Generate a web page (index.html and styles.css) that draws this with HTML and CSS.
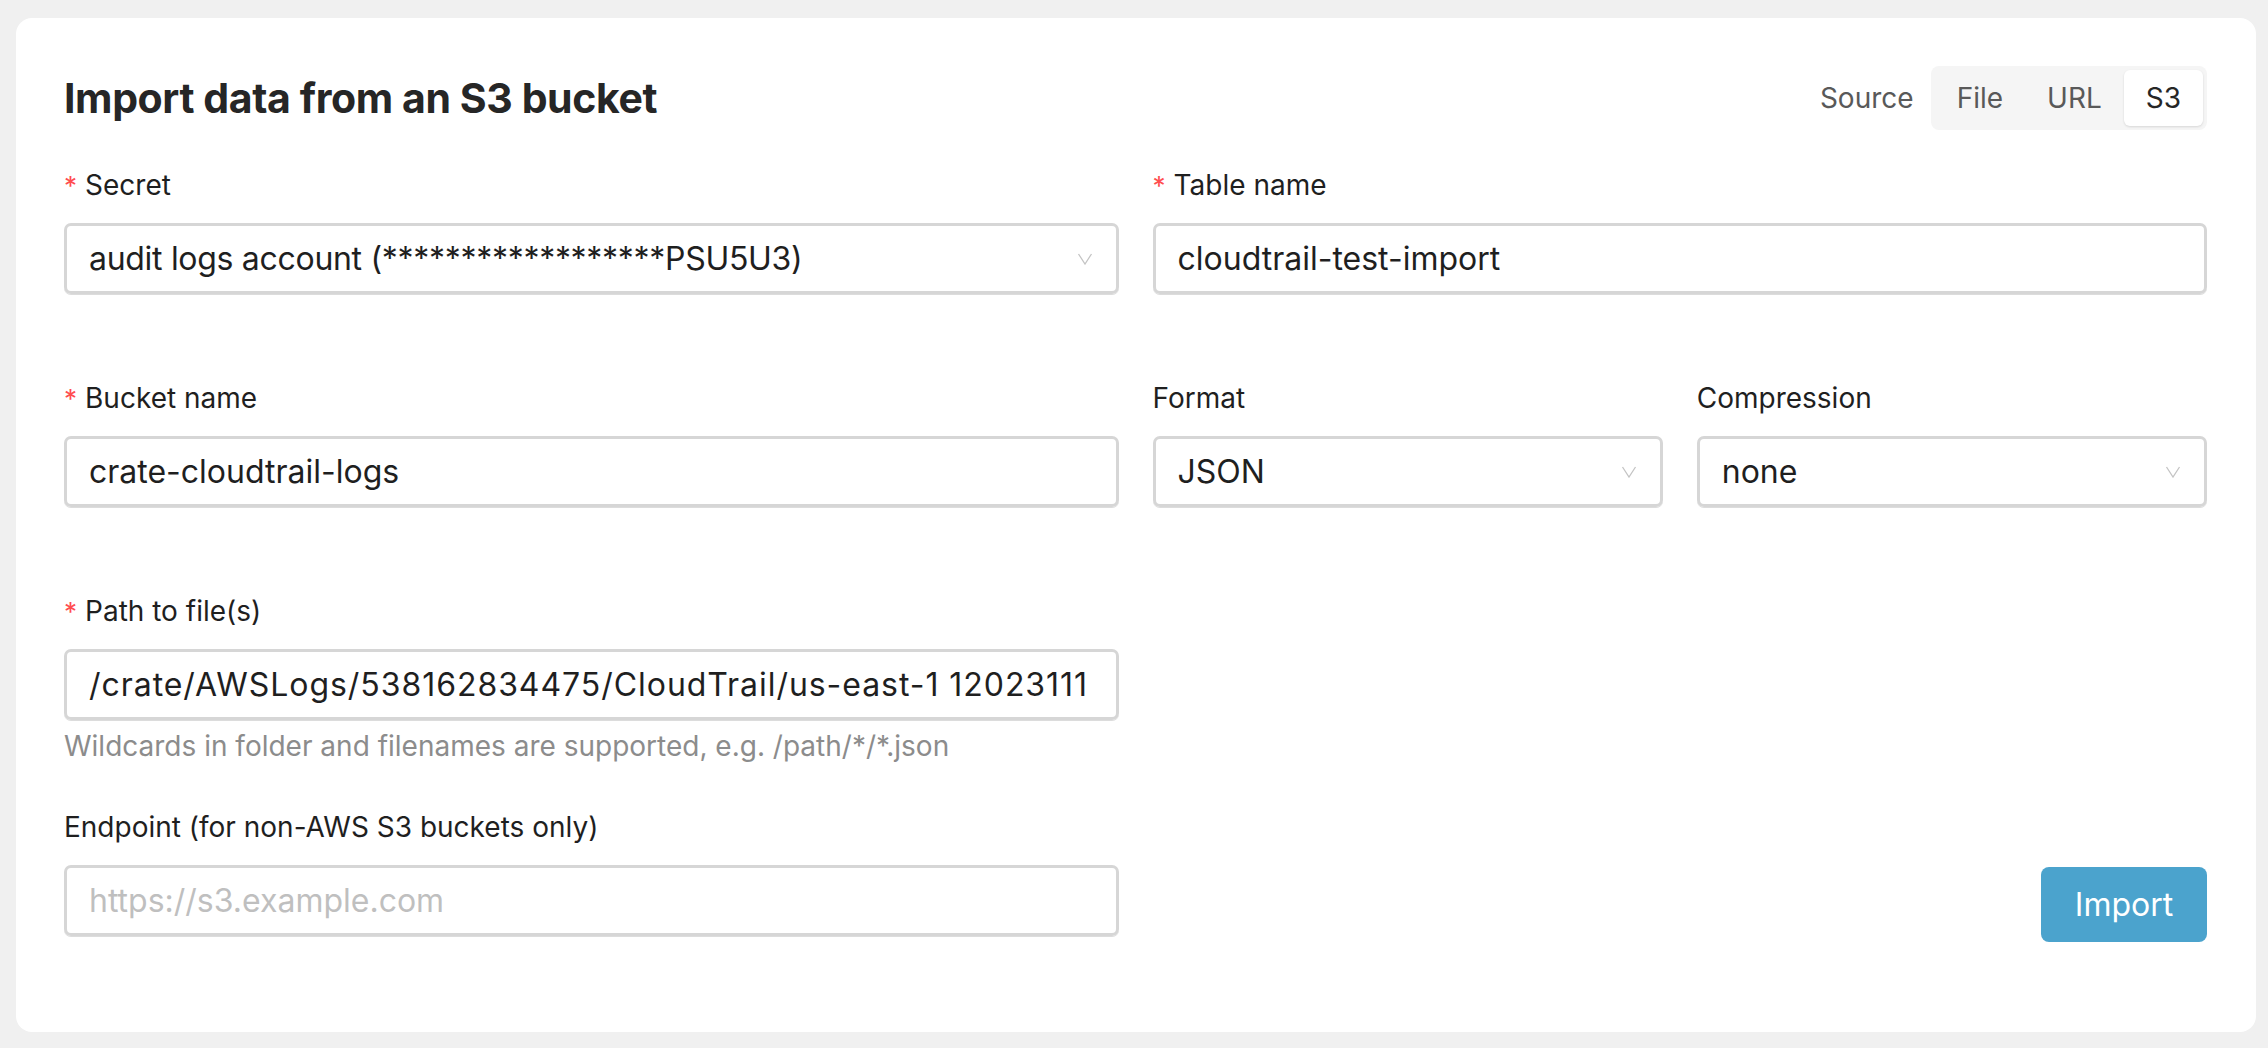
FILE: index.html
```html
<!DOCTYPE html>
<html lang="en">
<head>
<meta charset="utf-8">
<title>Import data from an S3 bucket</title>
<link rel="stylesheet" href="styles.css">
</head>
<body>
<main class="card">
  <header class="header">
    <h1 class="title">Import data from an S3 bucket</h1>
    <div class="source">
      <span class="source-label">Source</span>
      <div class="segmented">
        <span class="seg-item">File</span>
        <span class="seg-item">URL</span>
        <span class="seg-item seg-active">S3</span>
      </div>
    </div>
  </header>

  <form class="form">
    <div class="item">
      <label class="label"><span class="req">*</span>Secret</label>
      <div class="control select">
        <span class="value tight">audit logs account (******************PSU5U3)</span>
        <svg class="chev" viewBox="0 0 16 12" width="16" height="12"><path d="M1.5 1 L8 11 L14.5 1" fill="none" stroke="#c4c4c4" stroke-width="1.3"/></svg>
      </div>
    </div>
    <div class="item">
      <label class="label"><span class="req">*</span>Table name</label>
      <div class="control"><span class="value">cloudtrail-test-import</span></div>
    </div>

    <div class="item">
      <label class="label"><span class="req">*</span>Bucket name</label>
      <div class="control"><span class="value">crate-cloudtrail-logs</span></div>
    </div>
    <div class="split">
      <div class="item">
        <label class="label">Format</label>
        <div class="control select">
          <span class="value">JSON</span>
          <svg class="chev" viewBox="0 0 16 12" width="16" height="12"><path d="M1.5 1 L8 11 L14.5 1" fill="none" stroke="#c4c4c4" stroke-width="1.3"/></svg>
        </div>
      </div>
      <div class="item">
        <label class="label">Compression</label>
        <div class="control select">
          <span class="value">none</span>
          <svg class="chev" viewBox="0 0 16 12" width="16" height="12"><path d="M1.5 1 L8 11 L14.5 1" fill="none" stroke="#c4c4c4" stroke-width="1.3"/></svg>
        </div>
      </div>
    </div>

    <div class="item">
      <label class="label"><span class="req">*</span>Path to file(s)</label>
      <div class="control"><span class="value wide">/crate/AWSLogs/538162834475/CloudTrail/us-east-1 12023111</span></div>
      <div class="help">Wildcards in folder and filenames are supported, e.g. /path/*/*.json</div>
    </div>
    <div></div>

    <div class="item last-row">
      <label class="label">Endpoint (for non-AWS S3 buckets only)</label>
      <div class="control"><span class="value placeholder">https://s3.example.com</span></div>
    </div>
    <div class="actions last-row">
      <button type="button" class="btn">Import</button>
    </div>
  </form>
</main>
</body>
</html>
```

FILE: styles.css
```css
* { box-sizing: border-box; }
html, body { height: 100%; }
body {
  margin: 0;
  padding: 18px 12px 16px 16px;
  background: #f0f0f0;
  font-family: Inter, "Noto Sans", "Liberation Sans", sans-serif;
  color: #1f1f1f;
}
.card {
  background: #fff;
  border-radius: 16px;
  height: 1014px;
  padding: 48px 49px 48px 48px;
}
.header {
  display: flex;
  align-items: center;
  justify-content: space-between;
  height: 64px;
  margin-bottom: 37px;
}
.title {
  margin: 0;
  font-size: 41px;
  font-weight: 700;
  color: #262626;
  letter-spacing: -0.4px;
}
.source {
  display: flex;
  align-items: center;
  gap: 17px;
}
.source-label {
  font-size: 28px;
  color: #595959;
}
.segmented {
  display: flex;
  background: #f5f5f5;
  border-radius: 8px;
  padding: 4px;
  height: 64px;
}
.seg-item {
  display: flex;
  align-items: center;
  justify-content: center;
  padding: 0 22px;
  font-size: 28px;
  color: #595959;
  border-radius: 6px;
}
.seg-active {
  background: #fff;
  color: #262626;
  box-shadow: 0 1px 3px rgba(0,0,0,0.08), 0 1px 2px rgba(0,0,0,0.05);
}
.form {
  display: grid;
  grid-template-columns: minmax(0, 1fr) minmax(0, 1fr);
  column-gap: 34px;
  row-gap: 86px;
}
.split {
  display: grid;
  grid-template-columns: minmax(0, 1fr) minmax(0, 1fr);
  column-gap: 34px;
  min-width: 0;
}
.item {
  position: relative;
  display: flex;
  flex-direction: column;
  min-width: 0;
}
.last-row { margin-top: 3px; }
.label {
  display: block;
  font-size: 28px;
  line-height: 36px;
  height: 36px;
  margin-bottom: 20px;
  color: #1f1f1f;
  white-space: nowrap;
}
.req {
  color: #ff4d4f;
  margin-right: 8px;
  font-size: 26px;
}
.control {
  height: 71px;
  border: 3px solid #d6d6d6;
  border-radius: 7px;
  display: flex;
  align-items: center;
  padding: 0 20px 0 22px;
  font-size: 32px;
  color: #1f1f1f;
  white-space: nowrap;
  overflow: hidden;
  min-width: 0;
  box-shadow: 0 1px 0 #dcdcdc;
}
.select { justify-content: space-between; }
.value { overflow: hidden; min-width: 0; }
.tight { letter-spacing: -0.3px; }
.wide { letter-spacing: 0.95px; }
.placeholder { color: #bfbfbf; }
.chev { flex: none; margin-right: 3px; }
.help {
  position: absolute;
  top: 135px;
  left: 0;
  font-size: 28px;
  color: #8c8c8c;
  line-height: 36px;
  white-space: nowrap;
}
.actions {
  display: flex;
  justify-content: flex-end;
  align-items: flex-end;
}
.btn {
  width: 166px;
  height: 75px;
  margin-bottom: -6px;
  border: none;
  border-radius: 8px;
  background: #4ba3cd;
  color: #fff;
  font-family: Inter, "Noto Sans", sans-serif;
  font-size: 32px;
  cursor: pointer;
}
```
